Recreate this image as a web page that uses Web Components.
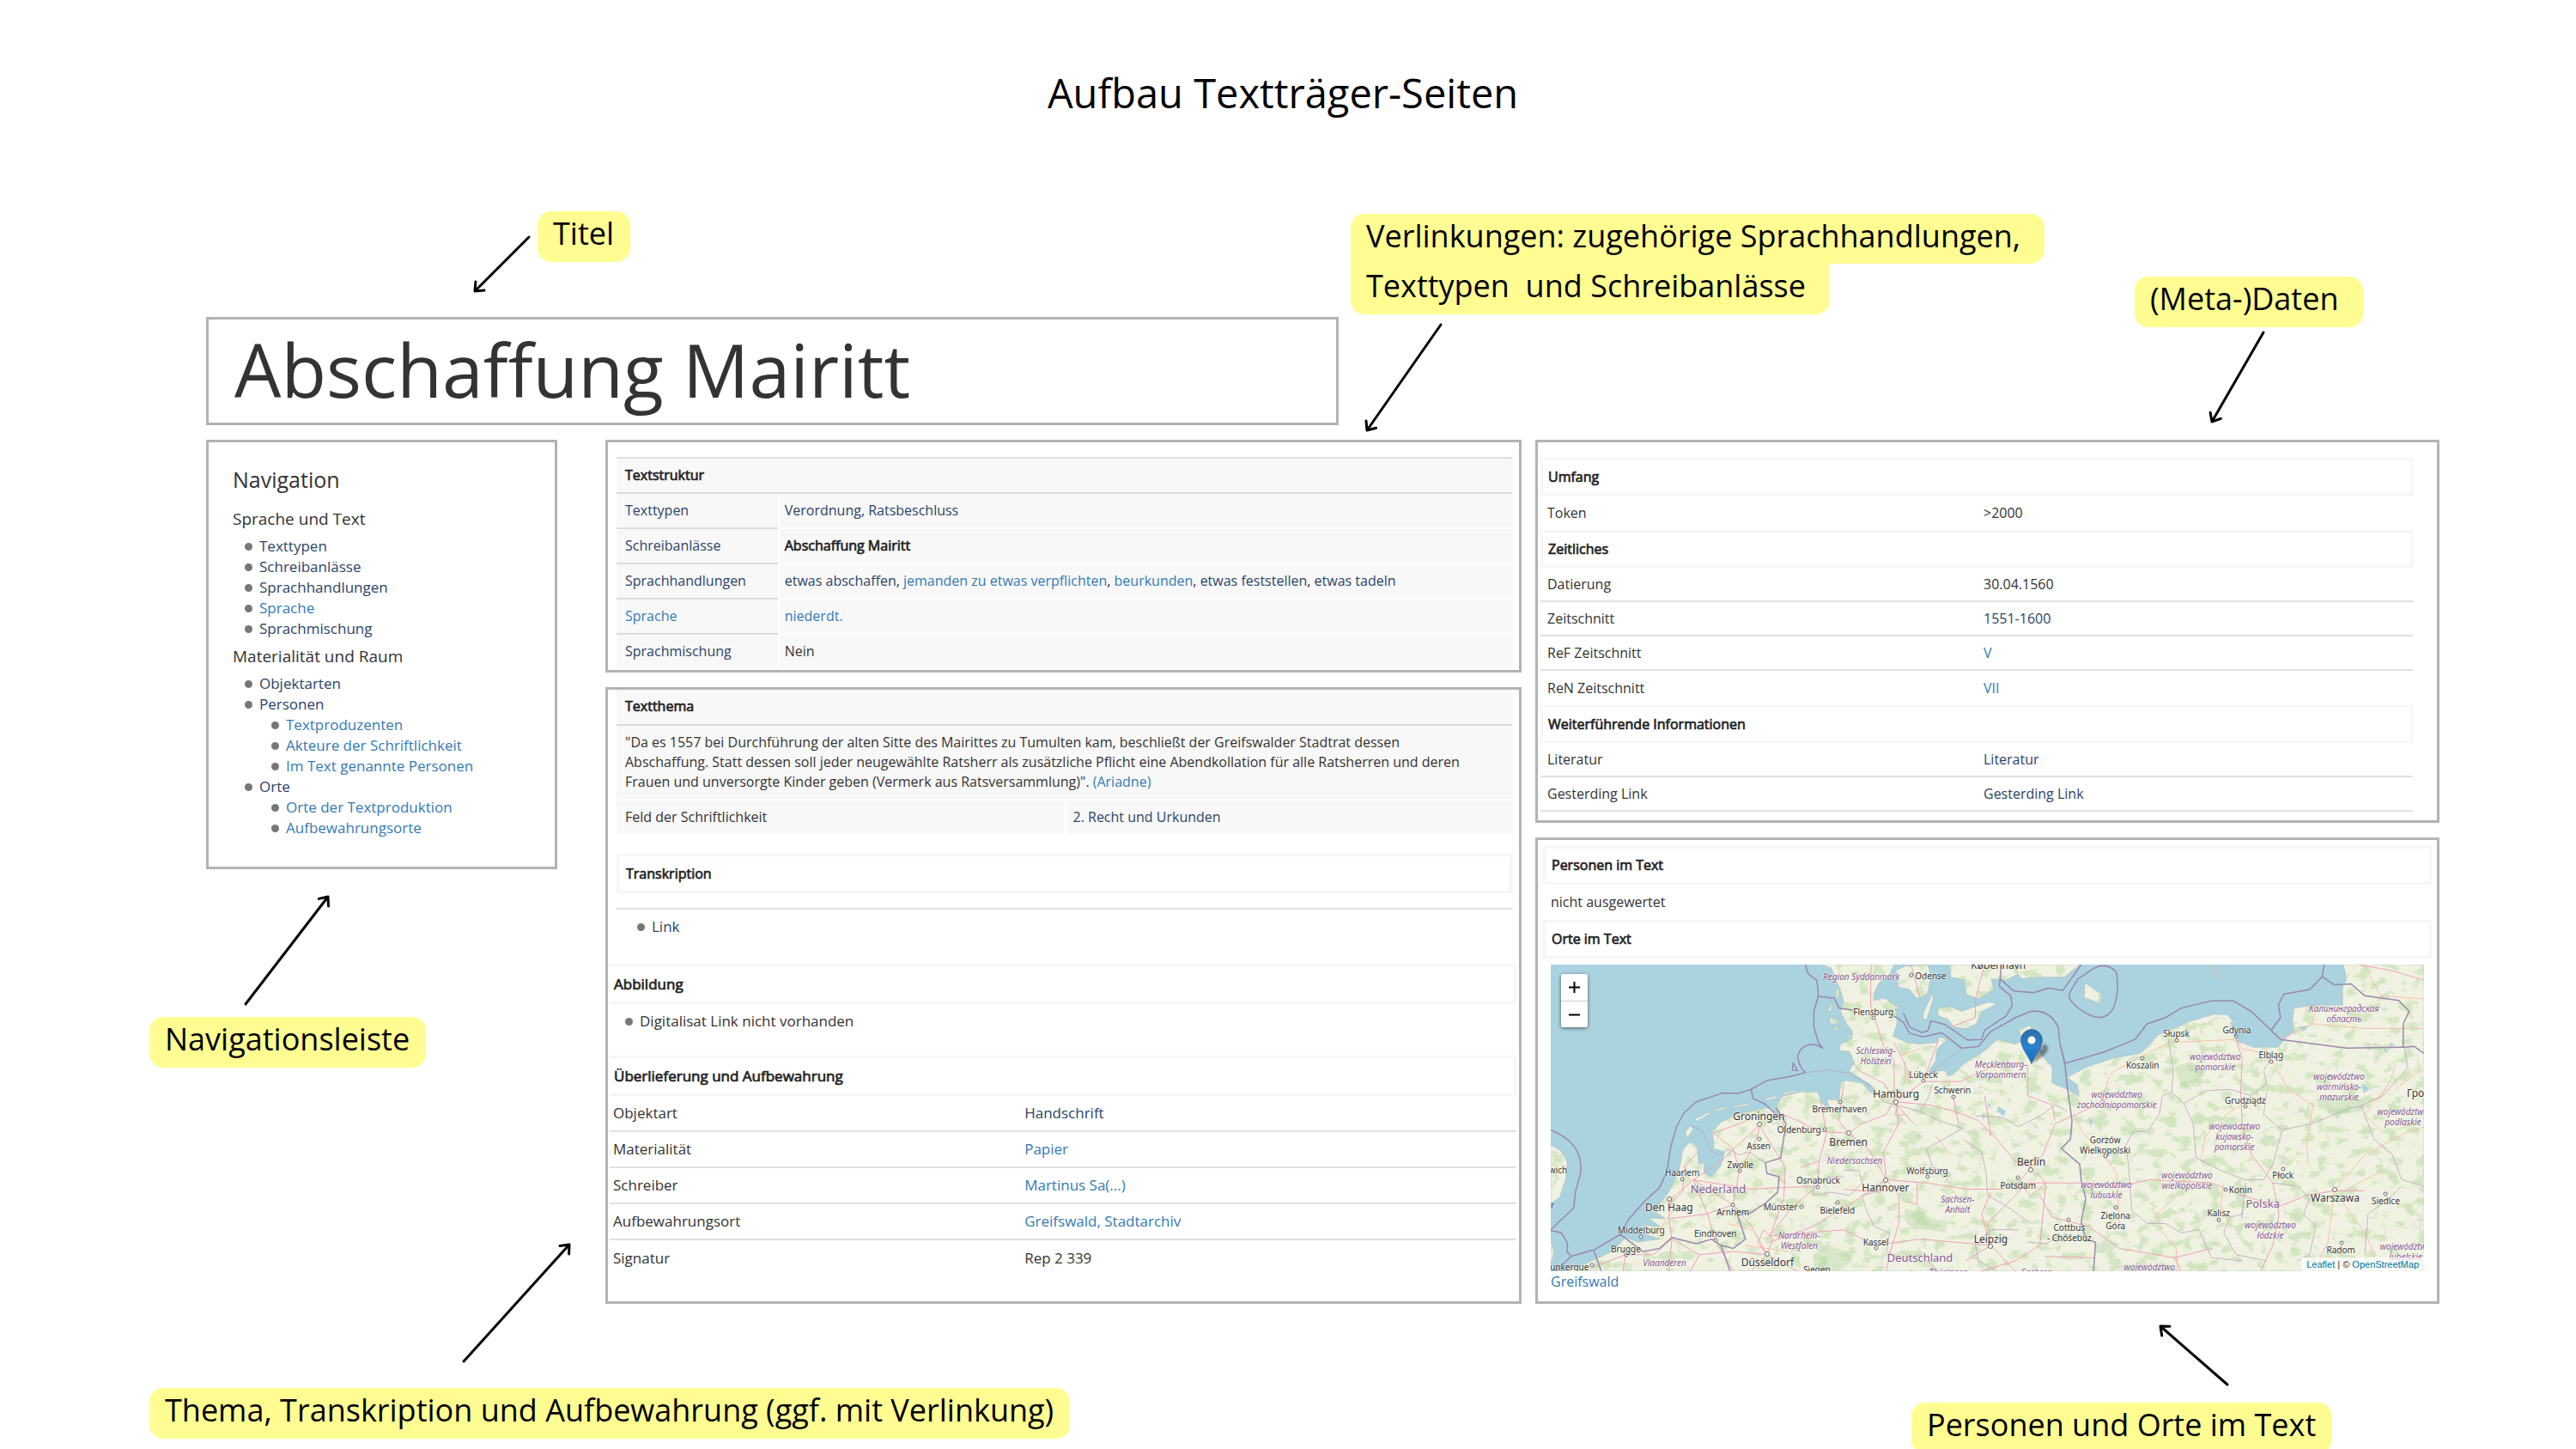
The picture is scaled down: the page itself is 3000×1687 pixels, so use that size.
<!DOCTYPE html>
<html lang="de">
<head>
<meta charset="utf-8">
<title>Aufbau Textträger-Seiten</title>
<style>
  body { margin: 0; background: #fff; font-family: "Open Sans", "Noto Sans", sans-serif; color: #333; }
</style>
</head>
<body>
<annotated-page>
  <h1 slot="heading">Aufbau Textträger-Seiten</h1>
  <h2 slot="title">Abschaffung Mairitt</h2>
  <site-nav slot="nav"></site-nav>
  <frame-box slot="middle"><text-structure></text-structure></frame-box>
  <frame-box slot="middle"><text-theme></text-theme></frame-box>
  <frame-box slot="right"><meta-data></meta-data></frame-box>
  <frame-box slot="right"><people-places></people-places></frame-box>

  <call-out slot="notes" style="--x:626;--y:246px"><span>Titel</span></call-out>
  <call-out slot="notes" style="--x:1573;--y:249px"><span>Verlinkungen: zugehörige Sprachhandlungen, </span><span>Texttypen  und Schreibanlässe </span></call-out>
  <call-out slot="notes" style="--x:2486;--y:322px"><span>(Meta-)Daten </span></call-out>
  <call-out slot="notes" style="--x:174;--y:1184px"><span>Navigationsleiste</span></call-out>
  <call-out slot="notes" style="--x:174;--y:1616px"><span>Thema, Transkription und Aufbewahrung (ggf. mit Verlinkung)</span></call-out>
  <call-out slot="notes" style="--x:2226;--y:1633px"><span>Personen und Orte im Text</span></call-out>
  <arrow-layer slot="notes"></arrow-layer>
</annotated-page>

<script>
const base = `
  * { box-sizing: border-box; }
  a { color: #337ab7; text-decoration: none; }
  a.dark { color: #2b4368; }
  table { width: 100%; border-collapse: separate; border-spacing: 0; table-layout: fixed; }
  th, td { text-align: left; font-weight: 400; padding: 0 8px; vertical-align: middle; }
  h3, .head { margin: 0; font-size: inherit; font-weight: 400; color: #222; -webkit-text-stroke: .7px #222; }
  .head { border: 3px solid #f6f6f6; }
  ul { list-style: none; margin: 0; padding: 0; }
  li::before { content: ""; display: inline-block; width: 9px; height: 9px; border-radius: 50%; background: #777; margin: 0 8px 0 13px; vertical-align: 1px; }
`;
function define(name, css, html, ready) {
  customElements.define(name, class extends HTMLElement {
    constructor() {
      super();
      const root = this.attachShadow({ mode: "open" });
      root.innerHTML = `<style>${base}${css}</style>${html}`;
      if (ready) ready(root);
    }
  });
}

define("annotated-page", `
  :host { display: block; position: relative; min-height: 100vh; overflow: hidden; padding: 76px 0 160px; }
  ::slotted(h1) { margin: 0; padding-right: 12px; font-size: 47px; line-height: 64px; font-weight: 400; text-align: center; color: #000; }
  main { margin-top: 229px; padding: 0 5.3% 0 8%; display: flex; flex-direction: column; gap: 17px; }
  .title { width: 50.7%; border: 3px solid #b3b3b3; padding: 0 30px 4px; }
  ::slotted(h2) { margin: 0; font-size: 86px; line-height: 116px; font-weight: 400; white-space: nowrap; }
  .columns { display: grid; grid-template-columns: 449fr 1067fr 1053fr; column-gap: 16px; align-items: start; }
  .nav { padding-right: 40px; }
  .stack { display: flex; flex-direction: column; gap: 17px; min-width: 0; }
`, `
  <slot name="heading"></slot>
  <main>
    <div class="title"><slot name="title"></slot></div>
    <div class="columns">
      <div class="nav"><slot name="nav"></slot></div>
      <div class="stack"><slot name="middle"></slot></div>
      <div class="stack"><slot name="right"></slot></div>
    </div>
  </main>
  <slot name="notes"></slot>
`);

define("frame-box", `:host { display: block; border: 3px solid #b3b3b3; background: #fff; }`, `<slot></slot>`);

define("call-out", `
  :host { position: absolute; left: calc(var(--x) / 30 * 1%); top: var(--y); font-size: 36px; line-height: 51px; color: #000; white-space: pre; }
  ::slotted(span) { display: block; width: fit-content; padding: 0 19px 8px 18px; background: #fffd91; border-radius: 16px; }
  ::slotted(span:first-child:not(:last-child)) { border-bottom-left-radius: 0; padding-bottom: 7px; }
  ::slotted(span:last-child:not(:first-child)) { border-top-left-radius: 0; border-top-right-radius: 0; }
`, `<slot></slot>`);

define("arrow-layer", `
  :host { position: absolute; inset: 0; pointer-events: none; }
  svg { width: 100%; height: 100%; display: block; }
  path { fill: none; stroke: #000; stroke-width: 3; stroke-linecap: round; stroke-linejoin: round; }
`, `<svg viewBox="0 0 3000 1687" preserveAspectRatio="xMidYMin meet" aria-hidden="true"></svg>`, root => {
  const arrows = [[616,276,553,339],[1678,378,1592,501],[2636,387,2576,491],[286,1169,382,1044],[540,1585,663,1449],[2594,1612,2516,1544]];
  root.querySelector("svg").innerHTML = arrows.map(([x1,y1,x2,y2]) => {
    const a = Math.atan2(y1 - y2, x1 - x2), p = d => `${(x2 + 11 * Math.cos(a + d)).toFixed(1)} ${(y2 + 11 * Math.sin(a + d)).toFixed(1)}`;
    return `<path d="M${x1} ${y1}L${x2} ${y2}M${p(.7)}L${x2} ${y2}L${p(-.7)}"/>`;
  }).join("");
});

define("site-nav", `
  :host { display: block; border: 3px solid #b3b3b3; padding: 26px 20px 33px 28px; font-size: 17px; line-height: 24px; }
  h2 { margin: 0; font-size: 25px; line-height: 34px; font-weight: 400; }
  h3 { margin: 7px 0; font-size: 19px; line-height: 26px; -webkit-text-stroke: 0; color: #333; }
  h2 + h3 { margin-top: 16px; }
  ul { padding-left: 1px; }
  ul ul { padding-left: 31px; }
`, `
  <nav>
    <h2>Navigation</h2>
    <h3>Sprache und Text</h3>
    <ul>
      <li><a class="dark" href="#">Texttypen</a></li>
      <li><a class="dark" href="#">Schreibanlässe</a></li>
      <li><a class="dark" href="#">Sprachhandlungen</a></li>
      <li><a href="#">Sprache</a></li>
      <li><a class="dark" href="#">Sprachmischung</a></li>
    </ul>
    <h3>Materialität und Raum</h3>
    <ul>
      <li><a class="dark" href="#">Objektarten</a></li>
      <li><a class="dark" href="#">Personen</a>
        <ul>
          <li><a href="#">Textproduzenten</a></li>
          <li><a href="#">Akteure der Schriftlichkeit</a></li>
          <li><a href="#">Im Text genannte Personen</a></li>
        </ul></li>
      <li><a class="dark" href="#">Orte</a>
        <ul>
          <li><a href="#">Orte der Textproduktion</a></li>
          <li><a href="#">Aufbewahrungsorte</a></li>
        </ul></li>
    </ul>
  </nav>
`);

define("text-structure", `
  :host { display: block; padding: 17px 8px 2px 10px; font-size: 16px; line-height: 23px; }
  th, td { height: 41px; background: #f8f8f8; border-top: 2px solid #ddd; }
  th { padding-left: 10px; }
  td { border-top-color: #fff; border-left: 2px solid #fff; padding-left: 6px; }
  tr:nth-child(2) td { border-top-color: #ddd; }
  col:first-child { width: 18%; }
`, `
  <table>
    <colgroup><col><col></colgroup>
    <tr><th colspan="2"><h3>Textstruktur</h3></th></tr>
    <tr><th><a class="dark" href="#">Texttypen</a></th><td><a class="dark" href="#">Verordnung, Ratsbeschluss</a></td></tr>
    <tr><th><a class="dark" href="#">Schreibanlässe</a></th><td><h3>Abschaffung Mairitt</h3></td></tr>
    <tr><th><a class="dark" href="#">Sprachhandlungen</a></th><td><a class="dark" href="#">etwas abschaffen</a>, <a href="#">jemanden zu etwas verpflichten</a>, <a href="#">beurkunden</a>, <a class="dark" href="#">etwas feststellen</a>, <a class="dark" href="#">etwas tadeln</a></td></tr>
    <tr><th><a href="#">Sprache</a></th><td><a href="#">niederdt.</a></td></tr>
    <tr><th><a class="dark" href="#">Sprachmischung</a></th><td>Nein</td></tr>
  </table>
`);

define("text-theme", `
  :host { display: block; padding-bottom: 29px; font-size: 17px; line-height: 24px; }
  .upper { padding: 0 8px 0 10px; }
  .topic { background: #f8f8f8; font-size: 16px; line-height: 23px; }
  .topic h3 { padding: 8px 10px 9px; border-bottom: 2px solid #ddd; }
  .topic p { margin: 0; padding: 8px 10px; }
  .topic td { height: 41px; border-top: 2px solid #fff; padding-left: 10px; }
  .topic td + td { border-left: 2px solid #fff; padding-left: 8px; }
  .upper .head { margin: 23px 0 17px; padding: 8px; font-size: 16px; }
  .links { border-top: 2px solid #e0e0e0; padding: 8px 11px 31px; }
  .lower { padding: 0 3px 0 2px; }
  .lower h3 { padding: 8px 5px; line-height: 25px; border: 3px solid #f6f6f6; border-left: 0; }
  .lower ul { padding: 8px 5px 28px; }
  .lower td, .lower th { height: 42px; border-bottom: 2px solid #e0e0e0; padding-left: 4px; }
  .lower tr:last-child > * { border-bottom: 0; }
  .lower td { padding-left: 8px; }
  .lower col:first-child { width: 45%; }
`, `
  <div class="upper">
    <div class="topic">
      <h3>Textthema</h3>
      <p>"Da es 1557 bei Durchführung der alten Sitte des Mairittes zu Tumulten kam, beschließt der Greifswalder Stadtrat dessen<br>Abschaffung. Statt dessen soll jeder neugewählte Ratsherr als zusätzliche Pflicht eine Abendkollation für alle Ratsherren und deren<br>Frauen und unversorgte Kinder geben (Vermerk aus Ratsversammlung)". <a href="#">(Ariadne)</a></p>
      <table><tr><td>Feld der Schriftlichkeit</td><td><a class="dark" href="#">2. Recht und Urkunden</a></td></tr></table>
    </div>
    <h3 class="head">Transkription</h3>
    <ul class="links"><li><a class="dark" href="#">Link</a></li></ul>
  </div>
  <div class="lower">
    <h3>Abbildung</h3>
    <ul><li>Digitalisat Link nicht vorhanden</li></ul>
    <h3>Überlieferung und Aufbewahrung</h3>
    <table>
      <colgroup><col><col></colgroup>
      <tr><th>Objektart</th><td><a class="dark" href="#">Handschrift</a></td></tr>
      <tr><th>Materialität</th><td><a href="#">Papier</a></td></tr>
      <tr><th>Schreiber</th><td><a href="#">Martinus Sa(...)</a></td></tr>
      <tr><th>Aufbewahrungsort</th><td><a href="#">Greifswald, Stadtarchiv</a></td></tr>
      <tr><th>Signatur</th><td>Rep 2 339</td></tr>
    </table>
  </div>
`);

define("meta-data", `
  :host { display: block; padding: 18px 28px 10px 3px; font-size: 16px; line-height: 23px; }
  th, td { height: 40px; }
  .head { height: 44px; padding: 0 6px; }
  .line > * { border-bottom: 2px solid #e0e0e0; }
`, `
  <table>
    <tr><th class="head" colspan="2">Umfang</th></tr>
    <tr><th>Token</th><td>&gt;2000</td></tr>
    <tr><th class="head" colspan="2">Zeitliches</th></tr>
    <tr class="line"><th>Datierung</th><td>30.04.1560</td></tr>
    <tr class="line"><th>Zeitschnitt</th><td><a class="dark" href="#">1551-1600</a></td></tr>
    <tr class="line"><th>ReF Zeitschnitt</th><td><a href="#">V</a></td></tr>
    <tr><th>ReN Zeitschnitt</th><td><a href="#">VII</a></td></tr>
    <tr><th class="head" colspan="2">Weiterführende Informationen</th></tr>
    <tr class="line"><th>Literatur</th><td><a class="dark" href="#">Literatur</a></td></tr>
    <tr class="line"><th>Gesterding Link</th><td><a class="dark" href="#">Gesterding Link</a></td></tr>
  </table>
`);

define("people-places", `
  :host { display: block; padding: 7px 6px 11px; font-size: 16px; line-height: 23px; }
  .head { padding: 8px 7px; }
  p { margin: 0; padding: 9px; }
  place-map { margin: 7px 9px 0; }
  .place { display: block; padding: 0 9px; line-height: 24px; }
`, `
  <h3 class="head">Personen im Text</h3>
  <p>nicht ausgewertet</p>
  <h3 class="head">Orte im Text</h3>
  <place-map></place-map>
  <a class="place" href="#">Greifswald</a>
`);

/* Map geometry: x runs 45..2893, y runs 450..1433. Labels are placed by the same coordinates as percentages. */
const land = [
  "M45 1433L100 1432L180 1400L245 1370L290 1325L330 1340L400 1330L340 1310L345 1285L400 1290L365 1262L420 1265L380 1240L430 1180L462 1115L478 1040L500 1018L522 1034L528 1090L545 1085L545 1120L570 1130L600 1095L612 1050L578 1040L572 985L600 955L660 928L720 915L765 908L778 940L795 932L782 905L800 872L860 858L915 858L925 885L940 905L958 920L945 882L985 885L990 830L1010 822L1060 830L1095 865L1110 868L1085 832L1060 818L1018 790L1035 765L1020 730L988 725L990 705L1025 690L1030 665L1010 640L990 600L1000 565L985 520L970 490L960 460L925 450L1165 450L1150 480L1115 510L1098 545L1100 565L1130 558L1165 575L1172 605L1175 640L1160 680L1210 700L1250 705L1306 700L1310 682L1338 690L1305 720L1300 760L1275 795L1330 790L1340 808L1360 800L1400 762L1440 740L1475 715L1500 690L1560 705L1590 690L1625 708L1648 742L1680 780L1680 830L1730 850L1768 872L1762 835L1728 812L1790 780L1880 750L1968 735L2000 705L2028 675L2130 632L2210 610L2253 612L2275 640L2262 635L2280 695L2340 716L2418 715L2438 690L2470 665L2463 640L2468 590L2528 580L2628 580L2628 520L2640 500L2630 450L2893 450L2893 1433Z",
  "M1170 470L1200 455L1275 450L1285 490L1272 545L1240 560L1215 530L1180 522Z",
  "M1345 450L1560 450L1568 480L1530 500L1480 495L1490 530L1440 560L1400 545L1395 500L1350 490Z",
  "M1305 590L1350 585L1385 600L1430 585L1470 572L1500 575L1450 600L1432 640L1400 655L1360 650L1340 625L1310 615Z",
  "M1265 595L1290 542L1292 560L1270 628L1258 620ZM1112 565L1140 560L1180 590L1150 600Z",
  "M1545 450L1770 450L1720 490L1640 490L1580 495L1560 470Z",
  "M1788 510L1840 545L1838 575L1784 555Z",
  "M1572 660L1610 645L1612 665L1650 700L1655 725L1620 720L1590 710Z",
  "M45 1028L75 1045L98 1082L95 1130L75 1195L45 1215ZM45 1340L55 1365L50 1400L45 1400Z",
  "M485 985L505 965L508 980L488 1008ZM955 620L985 630L975 640L958 640ZM975 530L985 528L985 555L976 555ZM948 600L968 565L958 600ZM1010 680L1030 675L1028 685ZM965 650L990 655L975 662Z",
  "M515 945L560 925L562 930L520 952ZM575 915L620 905L622 910L578 920ZM640 905L690 895L692 900L642 910ZM745 880L780 872L782 877L748 886ZM800 862L845 852L845 857L802 867Z"
];
const lakes = "M1505 905L1530 920L1522 935L1500 920ZM1450 925L1462 935L1455 948ZM1470 890L1482 905L1472 908ZM1800 940L1812 950L1806 972ZM2295 1250L2305 1235L2300 1270ZM2690 830L2715 850L2695 862ZM2780 700L2795 705L2788 715ZM2760 720L2775 722L2770 735ZM2480 650L2520 645L2500 665Z";
const borders = [
  "M875 450L885 480L912 500L918 540L915 560L903 600L903 650L918 700L932 718Q900 695 868 715Q838 740 862 780L875 796L830 808L750 822L698 850L660 862L605 862L520 890L480 925L455 970L435 1040L425 1110L400 1165L350 1210L300 1265L272 1315L185 1365L112 1385L60 1433",
  "M835 765L850 790L833 788ZM918 552L970 558L985 590L1030 596",
  "M698 850L705 880L740 895L775 925M45 980Q90 1000 110 1020Q150 1060 142 1120L125 1180L120 1230L45 1300M45 1302L80 1310L100 1345L98 1370L112 1385M185 1365L210 1433",
  "M1165 615L1195 635L1215 670L1260 682L1320 668L1385 718L1440 712L1480 665L1560 620L1610 600Q1670 592 1700 650L1705 700L1722 765",
  "M1195 605L1215 650L1255 668L1275 662L1285 630L1330 642L1405 692L1450 690L1460 660L1530 615L1550 580L1545 550L1508 520L1515 450",
  "M1510 495L1555 535L1620 540L1670 525L1715 533L1775 450",
  "M1790 480Q1850 430 1890 475Q1900 540 1880 590Q1850 640 1790 605Q1720 565 1740 535L1765 495Z",
  "M1718 768L1850 730L1950 690L1990 640L2050 620L2100 590L2200 566L2270 566L2330 600L2425 690L2640 718L2830 715M2395 660L2425 620L2418 580L2435 545L2520 530L2560 490L2568 450M2560 488L2600 515L2655 512L2700 550L2810 565L2845 600L2825 640L2825 715L2860 712L2893 735",
  "M1705 700L1722 770L1728 830L1745 950L1740 1010L1710 1040L1770 1090L1775 1140L1790 1200L1775 1275L1790 1330L1822 1340L1815 1433",
  "M780 910L812 960L795 1070L745 1085L750 1120L790 1130L785 1180L745 1215L690 1250L650 1240L680 1330L640 1360L600 1350L570 1330L520 1345L440 1325L400 1360L345 1370L272 1315M600 1350L630 1433"
];
const thin = [
  "M500 965L540 985L570 1050L600 1060L625 1040L660 1060L690 1050L745 1085M875 796L960 788L1020 800L1090 840L1130 890L1190 905L1260 925L1310 950L1390 975M1290 835L1275 880L1250 920M1385 720L1280 800",
  "M1000 1110L1050 1110L1060 1150L1020 1190L960 1180L900 1190L905 1150L960 1130L1000 1130M1100 1180L1060 1190L1075 1240L1100 1290L1150 1310L1140 1370L1200 1400L1250 1380L1310 1433",
  "M1390 975L1270 1040L1290 1100L1350 1120L1330 1150M1390 1010L1450 1050L1465 1120L1470 1190L1540 1230L1610 1280M1430 935L1520 940L1570 970L1650 930L1690 900L1730 920",
  "M1570 1300L1480 1300L1430 1350L1440 1400L1500 1433M1600 1340L1660 1345L1700 1320",
  "M2060 690L2075 790L2070 860L2040 870L2030 930L1990 985L1945 985L1920 1030L1930 1100L1935 1170L1940 1240L1990 1280L2050 1280L2100 1310L2160 1300L2200 1390L2300 1400",
  "M2070 860L2110 895L2180 855L2260 850L2330 870L2380 830L2370 790L2400 740M2110 895L2140 960L2150 1070L2230 1110L2310 1140L2370 1140L2400 1090L2430 980L2370 930L2380 860",
  "M2430 980L2530 960L2650 910L2690 905L2730 1010L2790 1060L2820 1140L2893 1160M2680 905L2760 870L2840 780L2830 720M2400 1150L2480 1160L2520 1200L2500 1250L2540 1290L2520 1380L2480 1400M2820 1160L2780 1200L2710 1250L2700 1380",
  "M2310 1150L2300 1250L2260 1260L2240 1310L2280 1380L2380 1400"
];
const pink = [
  "M1090 450L1088 580L1130 710L1165 760L1165 880M1165 880L1140 930L1060 960L1016 990L920 985L850 950L800 930L740 930L660 960L575 990",
  "M1172 890L1180 960L1130 1050L1140 1140L1180 1190L1180 1280L1150 1380L1140 1433M1172 890L1130 830L1050 790L1030 760M1172 890L1260 825L1310 690M1260 825L1380 825L1500 770L1575 765M1172 890L1280 900L1360 920L1440 950L1500 1010L1560 1080",
  "M1172 900L1230 960L1200 930L1170 935ZM1357 870L1375 960M1016 990L1080 1040L1140 1140L1270 1150L1400 1170L1510 1170L1600 1150L1780 1150M925 885L945 990L920 1080L915 1160L830 1230L760 1320M1016 990L985 950L1000 830",
  "M915 1160L800 1165L700 1170L510 1140M1140 1140L1050 1200L900 1290L760 1340M760 1320L1000 1300L1105 1350L1250 1330L1480 1350M1480 1350L1450 1250L1480 1180M1480 1350L1560 1433M1480 1350L1400 1400M1480 1350L1470 1280L1540 1210L1600 1150",
  "M510 1140L440 1200L430 1260L440 1330L530 1380L640 1370L750 1380M510 1140L560 1260L580 1330L640 1433M510 1140L640 1220L700 1290L750 1380M510 1140L600 1080L725 965L760 1020L810 1100L805 1200L760 1320M525 1050L480 1100L475 1180L430 1220",
  "M725 965L720 1000L690 1060L660 1110L640 1220L550 1250L430 1265M575 990L640 1040L660 1110M800 930L810 1000M440 1330L380 1380L290 1380L180 1420M440 1330L430 1433M530 1380L500 1433M290 1380L280 1433M750 1380L700 1433M750 1380L850 1433M750 1380L720 1340L740 1300L770 1330L750 1380",
  "M1610 1100L1560 1080M1610 1100L1650 1060L1690 960L1760 930L1860 880M1610 1100L1570 1150L1610 1190L1660 1150L1610 1100M1640 1190L1680 1260L1800 1290L1900 1360L2080 1390L2200 1360M1460 870L1480 1000M1600 770L1600 870L1680 900L1690 950",
  "M1780 1150L1900 1160L2000 1140L2200 1150L2300 1190L2420 1225L2510 1190L2600 1175L2700 1175M2280 690L2300 750L2295 860L2300 960L2330 1060L2400 1150L2420 1250L2400 1350L2360 1433",
  "M1660 1150L1640 1350L1560 1400L1450 1433M1655 1385L1820 1390M2080 1390L2100 1433M1165 700L1210 790L1215 830M1240 1150L1240 1220L1210 1210M1000 1170L1120 1180M860 1100L920 1080M1220 450L1250 560M1430 560L1430 620L1350 650M1460 450L1430 560",
  "M2680 450L2790 470L2893 500"
];
const orange = [
  "M1860 880L1850 860L1870 800L1960 750L2060 700L2280 690L2300 720L2350 730L2400 760L2450 850L2530 900L2520 980L2510 1010L2515 1090M2425 690L2530 640L2700 655L2893 655M2528 640L2540 590",
  "M2600 1175L2700 1060L2830 990L2893 970M2600 1180L2590 1260L2580 1340L2530 1433M2610 1190L2680 1280L2720 1350L2740 1433M2640 1170L2760 1110M2780 830L2700 930L2760 990M2800 770L2780 830L2740 890",
  "M2295 900L2250 930L2180 1000L2165 1080M2130 1140L2080 1200L2020 1250L2040 1310L2085 1360L2090 1433M1850 1060L1890 1120L1895 1200L1900 1300M1750 930L1780 990L1850 1060",
  "M480 1090L500 1150M450 1230L400 1300M600 1180L560 1220M620 1280L700 1300M680 1350L820 1370M700 1390L790 1420M1190 740L1250 720M1200 760L1200 830M1300 1000L1350 1060M1340 1160L1400 1220M2240 1150L2230 1220L2260 1290M2190 450L2240 500M2700 450L2750 550L2893 560M2800 850L2893 780"
];
const cities = [
  ["Odense",1284,485,0,1222,482],["Flensburg",1097,601,0,1097,620],["Lübeck",1260,802,0,1260,823],["Schwerin",1355,853,0,1357,873],["Hamburg",1171,866,1,1171,890],
  ["Bremerhaven",987,912,0,988,891],["Groningen",724,937,1,725,963],["Oldenburg",855,980,0,939,980],["Bremen",1016,1019,1,1017,991],["Assen",723,1031,0,725,1008],
  ["Zwolle",663,1091,0,662,1112],["Haarlem",474,1116,0,474,1137],["Osnabrück",917,1141,0,916,1162],["Wolfsburg",1273,1110,0,1273,1131],["Hannover",1137,1167,1,1136,1140],
  ["Den Haag",431,1230,1,431,1202],["Arnhem",639,1243,0,639,1221],["Münster",794,1227,0,862,1226],["Bielefeld",980,1238,0,980,1213],["Middelburg",340,1302,0,339,1323],
  ["Eindhoven",582,1313,0,582,1334],["Brugge",290,1361,0,291,1380],["Düsseldorf",752,1406,1,750,1379],["Kassel",1105,1338,0,1105,1359],["Siegen",913,1428,0],
  ["wich",69,1108,0],["r",51,1221,0],["unkerque",106,1418,0,179,1415],["København",1505,452,1],["Potsdam",1569,1158,0,1569,1134],["Leipzig",1480,1330,1,1480,1353],
  ["Berlin",1612,1082,1,1610,1109],["Cottbus<br>- Chóśebuz",1736,1309,0,1734,1269],["Koszalin",1975,773,0,1974,751],["Słupsk",2085,671,0,2086,691],["Gdynia",2282,660,0,2281,679],
  ["Elbląg",2394,739,0,2394,760],["Grudziądz",2310,884,0,2311,905],["Gorzów<br>Wielkopolski",1853,1027,0,1853,1064],["Zielona<br>Góra",1887,1270,0,1888,1230],["Konin",2295,1171,0,2245,1170],
  ["Kalisz",2223,1247,0,2223,1267],["Płock",2433,1125,0,2434,1104],["Warszawa",2603,1199,1,2603,1170],["Siedlce",2768,1207,0,2768,1185],["Radom",2622,1365,0,2623,1343],["Гро",2865,863,1]
];
const regions = [
  ["Region Syddanmark",1058,488],["Schleswig-<br>Holstein",1105,743],["Mecklenburg-<br>Vorpommern",1513,785],["Niedersachsen",1036,1077],["Sachsen-<br>Anhalt",1372,1219],
  ["Nordrhein-<br>Westfalen",855,1335],["Vlaanderen",416,1405],["Thüringen",1342,1437],["województwo<br>zachodniopomorskie",1891,882],["województwo<br>pomorskie",2212,761],
  ["województwo<br>warmińsko-<br>mazurskie",2616,841],["województwo<br>podlaskie",2824,936],["województwo<br>kujawsko-<br>pomorskie",2275,1000],["województwo<br>lubuskie",1857,1171],
  ["województwo<br>wielkopolskie",2120,1140],["województwo<br>łódzkie",2392,1300],["województwo",1998,1420],["województwo<br>lubelskie",2833,1370],["Калининградская<br>область",2632,608],["Sachsen",1630,1437]
];
const countries = [["Nederland",591,1168],["Deutschland",1249,1388],["Polska",2367,1215]];
const at = (x, y) => `left:${((x - 45) / 28.48).toFixed(2)}%;top:${((y - 450) / 9.83).toFixed(2)}%`;
const paths = (list, style) => `<path d="${list.join("")}" ${style}/>`;

define("place-map", `
  :host { display: block; position: relative; height: 357px; overflow: hidden; background: #aad3df; font-family: "Noto Sans", sans-serif; }
  .tiles { position: absolute; inset: 0; width: 100%; height: 100%; }
  .tiles path { fill: none; vector-effect: non-scaling-stroke; stroke-linejoin: round; }
  .label { position: absolute; transform: translate(-50%, -50%); white-space: nowrap; text-align: center; font-size: 10px; line-height: 12px; color: #333; text-shadow: 0 0 2px #fff, 0 0 2px #fff; }
  .big { font-size: 12px; }
  .region { font-style: italic; color: #85568f; }
  .country { font-size: 13px; color: #84568c; }
  .dot { position: absolute; transform: translate(-50%, -50%); width: 5px; height: 5px; border: 1px solid #666; border-radius: 50%; background: #fff; }
  .dot.large { width: 6px; height: 6px; }
  .zoom { position: absolute; left: 12px; top: 11px; width: 31px; border-radius: 3px; overflow: hidden; box-shadow: 0 1px 4px rgba(0,0,0,.6); background: #fff; }
  button { display: block; width: 100%; height: 31px; padding: 0; border: 0; background: #fff; }
  button + button { border-top: 1px solid #ccc; }
  button svg { display: block; margin: auto; }
  .pin { position: absolute; transform: translate(-13px, -40px); }
  .credit { position: absolute; right: 0; bottom: 0; padding: 0 6px; font: 11px/16px "Liberation Sans", Arial, sans-serif; background: rgba(255,255,255,.7); color: #333; white-space: nowrap; }
  .credit a { color: #0078a8; }
`, `
  <svg class="tiles" viewBox="45 450 2848 983" preserveAspectRatio="none" aria-hidden="true">
    <defs>
      <clipPath id="land"><path d="${land.join("")}"/></clipPath>
      <filter id="woods" x="0" y="0" width="100%" height="100%">
        <feTurbulence type="fractalNoise" baseFrequency=".022 .03" numOctaves="6" seed="7"/>
        <feColorMatrix values="0 0 0 0 .46  0 0 0 0 .70  0 0 0 0 .36  0 7 0 0 -3.7"/>
      </filter>
      <filter id="fields" x="0" y="0" width="100%" height="100%">
        <feTurbulence type="fractalNoise" baseFrequency=".02 .03" numOctaves="5" seed="21"/>
        <feColorMatrix values="0 0 0 0 .90  0 0 0 0 .87  0 0 0 0 .84  6 0 0 0 -3"/>
      </filter>
    </defs>
    <path d="${land.join("")}" style="fill:#f0f2e0;stroke:#a9b9bd;stroke-width:.6px"/>
    <g clip-path="url(#land)">
      <rect x="45" y="450" width="2848" height="983" filter="url(#fields)" opacity=".6"/>
      <rect x="45" y="450" width="2848" height="983" filter="url(#woods)" opacity=".5"/>
      <g opacity=".35">
        <path style="fill:#add19e" d="M1200 1235L1250 1240L1290 1265L1340 1275L1330 1310L1280 1300L1230 1300L1200 1270ZM900 1380L950 1350L1010 1370L1030 1400L980 1433L910 1425ZM2540 880L2620 870L2700 880L2690 920L2620 930L2550 910ZM2080 780L2130 760L2180 790L2160 840L2100 840ZM1820 1350L1860 1330L1900 1345L1870 1375L1825 1370ZM1190 1000L1230 980L1260 1000L1230 1030Z"/>
      </g>
    </g>
    <path d="${lakes}" style="fill:#aad3df"/>
    ${paths(orange, 'stroke="#f9c0a8" stroke-width="1"')}
    ${paths(pink, 'stroke="#f2a0b4" stroke-width="1"')}
    ${paths(thin, 'stroke="#b9a6bd" stroke-width="1" opacity=".8"')}
    ${paths(borders, 'stroke="#9a88ad" stroke-width="1.5"')}
  </svg>
  <div id="labels"></div>
  <svg class="pin" style="${at(1613, 768)}" width="44" height="41" viewBox="0 0 44 41" role="img" aria-label="Greifswald">
    <defs>
      <linearGradient id="blue" x1="0" y1="0" x2="0" y2="1"><stop offset="0" stop-color="#2e6fa5"/><stop offset=".5" stop-color="#2a81cb"/><stop offset="1" stop-color="#126fc6"/></linearGradient>
      <filter id="soft"><feGaussianBlur stdDeviation="1.5"/></filter>
    </defs>
    <path d="M13 40L22 21Q30 14 32 22Q32 30 13 40Z" fill="#000" opacity=".4" filter="url(#soft)"/>
    <path d="M13 40.500C11 34 .5 22 .5 13A12.500 12.500 0 0 1 25.500 13C25.500 22 15 34 13 40.500Z" fill="url(#blue)" stroke="#2e6c97" stroke-width=".8"/>
    <circle cx="13" cy="13" r="4.500" fill="#fff"/>
  </svg>
  <div class="zoom">
    <button aria-label="Vergrößern"><svg width="13" height="13" viewBox="0 0 13 13"><path d="M6.500 0V13M0 6.500H13" stroke="#000" stroke-width="2"/></svg></button>
    <button aria-label="Verkleinern"><svg width="13" height="13" viewBox="0 0 13 13"><path d="M0 6.500H13" stroke="#000" stroke-width="2"/></svg></button>
  </div>
  <div class="credit"><a href="#">Leaflet</a> | © <a href="#">OpenStreetMap</a></div>
`, root => {
  root.getElementById("labels").innerHTML =
    cities.filter(c => c[4]).map(c => `<i class="dot ${c[3] ? "large" : ""}" style="${at(c[4], c[5])}"></i>`).join("") +
    regions.map(r => `<span class="label region" style="${at(r[1], r[2])}">${r[0]}</span>`).join("") +
    countries.map(r => `<span class="label country" style="${at(r[1], r[2])}">${r[0]}</span>`).join("") +
    cities.map(c => `<span class="label ${c[3] ? "big" : ""}" style="${at(c[1], c[2])}">${c[0]}</span>`).join("");
});
</script>
</body>
</html>
